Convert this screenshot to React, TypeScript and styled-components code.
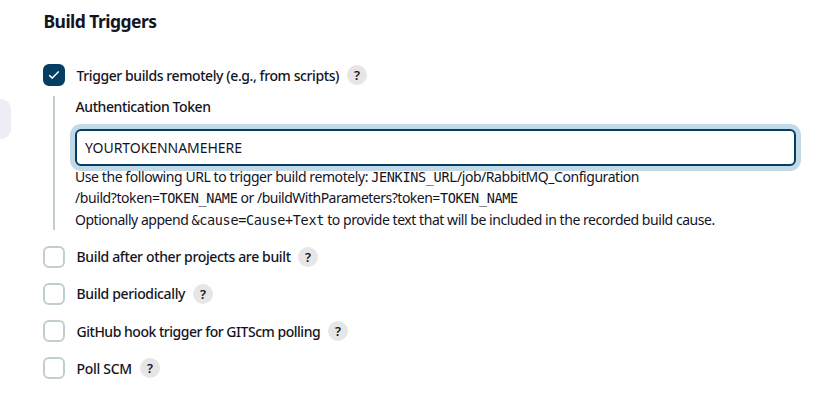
import React from "react";
import styled, { createGlobalStyle } from "styled-components";

const GlobalStyle = createGlobalStyle`
  *, *::before, *::after { box-sizing: border-box; }
  body {
    margin: 0;
    background: #fff;
    color: #14141f;
    font: 400 14px/21.3px "Noto Sans", sans-serif;
    font-kerning: normal;
  }
`;

const Page = styled.div`
  display: flex;
  height: 409px;
  overflow: hidden;
`;

const Sidebar = styled.aside`
  flex: 0 0 43px;
  padding-top: 99px;
`;

const SidebarItem = styled.div`
  width: 11px;
  height: 40px;
  border-radius: 0 10px 10px 0;
  background: #ededf3;
`;

const Section = styled.main`
  flex: 1;
  min-width: 0;
  padding-top: 9px;
`;

const Heading = styled.h2`
  margin: 0 0 31px;
  padding-left: 0.5px;
  font-size: 17.5px;
  line-height: 24px;
  font-weight: 700;
  letter-spacing: -0.54px;
`;

const TriggerRow = styled.div`
  display: flex;
  align-items: center;
  height: 22px;

  & + & {
    margin-top: 15px;
  }
`;

const Checkbox = styled.span<{ $checked?: boolean }>`
  display: flex;
  align-items: center;
  justify-content: center;
  flex: 0 0 22px;
  height: 22px;
  margin-right: 11px;
  border: 2px solid ${(p) => (p.$checked ? "#063d62" : "#c2cdd2")};
  border-radius: 6px;
  background: ${(p) => (p.$checked ? "#063d62" : "#fff")};
`;

const Label = styled.label<{ $tracking: number; $width: number; $drop: number }>`
  width: ${(p) => p.$width}px;
  margin-right: 8px;
  padding-top: ${(p) => p.$drop}px;
  padding-left: 0.5px;
  font-weight: 500;
  letter-spacing: ${(p) => p.$tracking}px;
  white-space: nowrap;
`;

const Help = styled.span`
  display: flex;
  align-items: center;
  justify-content: center;
  width: 20px;
  height: 20px;
  border-radius: 50%;
  background: #e6e6e7;
  font-size: 13px;
  line-height: 20px;
  font-weight: 600;
`;

const Nested = styled.div`
  margin: 10px 0 16px 10px;
  height: 134px;
  padding-left: 20px;
  border-left: 2px solid #c2cdd2;
`;

const FieldLabel = styled.div`
  height: 33px;
  padding-left: 0.5px;
  line-height: 22px;
  font-weight: 500;
  letter-spacing: -0.4px;
`;

const TokenInput = styled.input`
  display: block;
  width: 721px;
  height: 37px;
  padding: 0 8px;
  border: 2px solid #063d62;
  border-radius: 6px;
  outline: none;
  box-shadow: 0 0 0 5px #c2d9e7;
  background: #fff;
  color: inherit;
  font: inherit;
  letter-spacing: -0.05px;
`;

const Description = styled.div`
  position: relative;
  white-space: pre;
`;

const Text = styled.span<{ $tracking: number }>`
  letter-spacing: ${(p) => p.$tracking}px;
`;

const Code = styled.code`
  font: 400 13.5px/1 "DejaVu Sans Mono", monospace;
  letter-spacing: -0.33px;
`;

const triggers = [
  { name: "Build after other projects are built", tracking: -0.36, width: 214, drop: 0 },
  { name: "Build periodically", tracking: -0.36, width: 109, drop: 0 },
  { name: "GitHub hook trigger for GITScm polling", tracking: -0.48, width: 244, drop: 2 },
  { name: "Poll SCM", tracking: -0.3, width: 56, drop: 2 },
];

export default function App() {
  return (
    <>
      <GlobalStyle />
      <Page>
        <Sidebar>
          <SidebarItem />
        </Sidebar>
        <Section>
          <Heading>Build Triggers</Heading>
          <TriggerRow>
            <Checkbox $checked>
              <svg width="12" height="10" viewBox="0 0 12 10" fill="none">
                <path
                  d="M1.7 5.6 4.3 8.1 10.2 1.9"
                  stroke="#fff"
                  strokeWidth="1.5"
                  strokeLinecap="round"
                  strokeLinejoin="round"
                />
              </svg>
            </Checkbox>
            <Label $tracking={-0.41} $width={263} $drop={2}>
              Trigger builds remotely (e.g., from scripts)
            </Label>
            <Help>?</Help>
          </TriggerRow>
          <Nested>
            <FieldLabel>Authentication Token</FieldLabel>
            <TokenInput defaultValue="YOURTOKENNAMEHERE" />
            <Description>
              <div>
                <Text $tracking={-0.42}>{"Use the following URL to trigger build remotely: "}</Text>
                <Code>JENKINS_URL</Code>
                <Text $tracking={-0.45}>/job/RabbitMQ_Configuration</Text>
              </div>
              <div>
                <Text $tracking={-0.42}>/build?token=</Text>
                <Code>TOKEN_NAME</Code>
                <Text $tracking={-0.5}>{" or /buildWithParameters?token="}</Text>
                <Code>TOKEN_NAME</Code>
              </div>
              <div>
                <Text $tracking={-0.48}>{"Optionally append "}</Text>
                <Code>&amp;cause=Cause+Text</Code>
                <Text $tracking={-0.45}>
                  {" to provide text that will be included in the recorded build cause."}
                </Text>
              </div>
            </Description>
          </Nested>
          {triggers.map((t) => (
            <TriggerRow key={t.name}>
              <Checkbox />
              <Label $tracking={t.tracking} $width={t.width} $drop={t.drop}>
                {t.name}
              </Label>
              <Help>?</Help>
            </TriggerRow>
          ))}
        </Section>
      </Page>
    </>
  );
}
